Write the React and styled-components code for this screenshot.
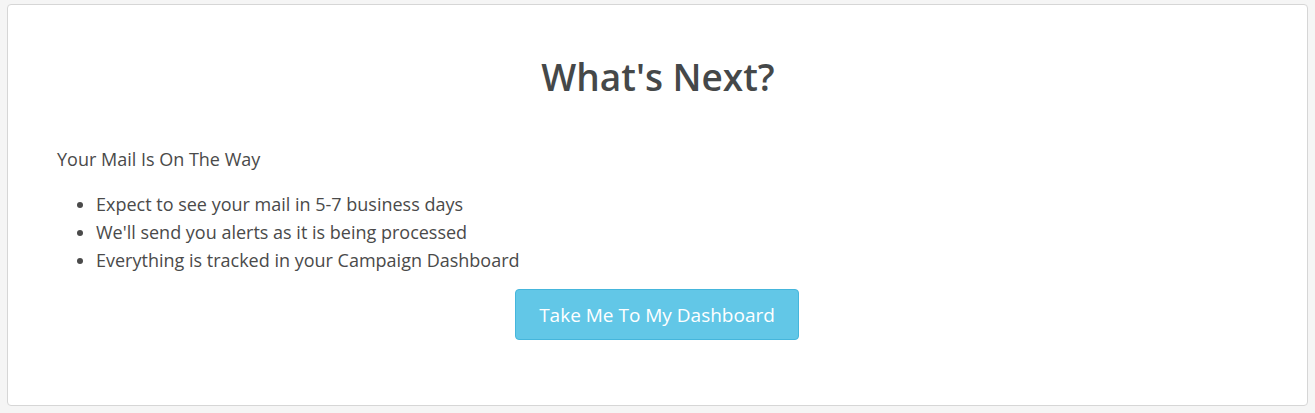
import React from 'react'
import styled, { createGlobalStyle } from 'styled-components'

const GlobalStyle = createGlobalStyle`
  html, body {
    margin: 0;
    padding: 0;
    background: #f5f5f5;
  }
  body {
    font-family: "Open Sans", "Noto Sans", sans-serif;
    color: #4a4a4a;
  }
`

const Page = styled.div`
  padding: 4px 7px 0 7px;
  width: 1301px;
`

const Panel = styled.div`
  background: #fff;
  border: 1px solid #d6d6d6;
  border-radius: 4px;
  padding: 50px 48px 65px 49px;
`

const Title = styled.h1`
  margin: 0 0 46px 0;
  text-align: center;
  font-size: 37px;
  font-weight: 600;
  color: #454849;
  line-height: 44px;
`

const Lead = styled.p`
  margin: 0 0 17px 0;
  font-size: 18px;
  line-height: 28px;
`

const List = styled.ul`
  margin: 0;
  padding-left: 39px;
  font-size: 18px;
  line-height: 28px;
`

const Actions = styled.div`
  display: flex;
  justify-content: center;
  padding-top: 15px;
`

const Button = styled.button`
  width: 284px;
  height: 51px;
  margin-left: -2px;
  background: #62c7e7;
  border: 1px solid #45b6dc;
  border-radius: 4px;
  color: #fff;
  font-family: inherit;
  font-size: 19px;
  cursor: pointer;
`

export default function App() {
  return (
    <Page>
      <GlobalStyle />
      <Panel>
        <Title>What's Next?</Title>
        <Lead>Your Mail Is On The Way</Lead>
        <List>
          <li>Expect to see your mail in 5-7 business days</li>
          <li>We'll send you alerts as it is being processed</li>
          <li>Everything is tracked in your Campaign Dashboard</li>
        </List>
        <Actions>
          <Button>Take Me To My Dashboard</Button>
        </Actions>
      </Panel>
    </Page>
  )
}
